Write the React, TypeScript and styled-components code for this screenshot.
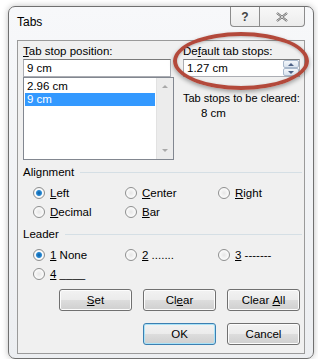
import React from 'react'
import styled, { createGlobalStyle } from 'styled-components'

const GlobalStyle = createGlobalStyle`
    body {
        margin: 0;
        background: #ffffff;
        font-family: "Liberation Sans", Arial, sans-serif;
        font-size: 11.5px;
        color: #000;
    }
`

const App = () => {
    return (
        <>
            <GlobalStyle />
            <Window>
                <TitleBar>
                    <Title>Tabs</Title>
                    <CaptionButtons>
                        <CaptionButton $w={28}>?</CaptionButton>
                        <CaptionButton $w={44}>
                            <svg width="12" height="10" viewBox="0 0 12 10">
                                <path d="M1 1 L11 9 M11 1 L1 9" stroke="#555" strokeWidth="2.2" fill="none" />
                                <path d="M1 1 L11 9 M11 1 L1 9" stroke="#fff" strokeWidth="0.8" fill="none" />
                            </svg>
                        </CaptionButton>
                    </CaptionButtons>
                </TitleBar>

                <Client>
                    <TopSection>
                        <Column>
                            <Label><u>T</u>ab stop position:</Label>
                            <TextBox>9 cm</TextBox>
                            <ListBox>
                                <ListItems>
                                    <ListItem>2.96 cm</ListItem>
                                    <ListItem $selected>9 cm</ListItem>
                                </ListItems>
                                <ScrollBar>
                                    <Arrow $up />
                                    <Arrow />
                                </ScrollBar>
                            </ListBox>
                        </Column>
                        <Column>
                            <Label>De<u>f</u>ault tab stops:</Label>
                            <SpinBox>
                                <span>1.27 cm</span>
                                <SpinButtons>
                                    <SpinButton><SpinArrow $up /></SpinButton>
                                    <SpinButton><SpinArrow /></SpinButton>
                                </SpinButtons>
                            </SpinBox>
                            <ClearLabel>Tab stops to be cleared:</ClearLabel>
                            <ClearValue>8 cm</ClearValue>
                        </Column>
                        <Highlight />
                    </TopSection>

                    <GroupHeader>
                        <span>Alignment</span>
                        <Rule />
                    </GroupHeader>
                    <RadioGrid>
                        <RadioOption><Radio $checked /><span><u>L</u>eft</span></RadioOption>
                        <RadioOption><Radio /><span><u>C</u>enter</span></RadioOption>
                        <RadioOption><Radio /><span><u>R</u>ight</span></RadioOption>
                        <RadioOption><Radio /><span><u>D</u>ecimal</span></RadioOption>
                        <RadioOption><Radio /><span><u>B</u>ar</span></RadioOption>
                    </RadioGrid>

                    <GroupHeader>
                        <span>Leader</span>
                        <Rule />
                    </GroupHeader>
                    <RadioGrid>
                        <RadioOption><Radio $checked /><span><u>1</u> None</span></RadioOption>
                        <RadioOption><Radio /><span><u>2</u> .......</span></RadioOption>
                        <RadioOption><Radio /><span><u>3</u> -------</span></RadioOption>
                        <RadioOption><Radio /><span><u>4</u> ____</span></RadioOption>
                    </RadioGrid>

                    <ButtonRow>
                        <Button><u>S</u>et</Button>
                        <Button>Cl<u>e</u>ar</Button>
                        <Button>Clear&nbsp;<u>A</u>ll</Button>
                    </ButtonRow>
                    <ButtonRow $last>
                        <Button $default>OK</Button>
                        <Button>Cancel</Button>
                    </ButtonRow>
                </Client>
            </Window>
        </>
    )
}

export default App

const Window = styled.div`
    margin: 6px 0 0 8px;
    width: 304px;
    height: 351px;
    border: 1px solid #707070;
    border-radius: 7px;
    background: linear-gradient(#f7f8fa, #eceef1);
    box-shadow: 0 0 6px rgba(0, 0, 0, 0.25);
    display: flex;
    flex-direction: column;
`
const TitleBar = styled.div`
    display: flex;
    justify-content: space-between;
    align-items: flex-start;
    height: 33px;
    padding-left: 8px;
    padding-right: 8px;
`
const Title = styled.div`
    margin-top: 8px;
    font-size: 12px;
    color: #000;
`
const CaptionButtons = styled.div`
    display: flex;
`
const CaptionButton = styled.div<{ $w: number }>`
    width: ${p => p.$w}px;
    height: 19px;
    border: 1px solid #8c8c8c;
    border-top: none;
    display: flex;
    align-items: center;
    justify-content: center;
    background: linear-gradient(#f8f8f8, #ececec);
    color: #444;
    font-size: 12px;
    font-weight: bold;

    &:first-child {
        border-radius: 0 0 0 4px;
        border-right: none;
    }
    &:last-child {
        border-radius: 0 0 4px 0;
    }
`
const Client = styled.div`
    margin: 0 8px 0 8px;
    height: 312px;
    border: 1px solid #9a9a9a;
    background: #f0f0f0;
    padding: 0 0 0 5px;
`
const TopSection = styled.div`
    position: relative;
    display: grid;
    grid-template-columns: 151px 117px;
    column-gap: 9px;
    height: 120px;
`
const Column = styled.div`
    display: flex;
    flex-direction: column;
`
const Label = styled.div`
    margin-top: 3px;
    line-height: 15px;
    height: 15px;
`
const TextBox = styled.div`
    box-sizing: border-box;
    height: 18px;
    width: 148px;
    border: 1px solid #abadb3;
    border-top-color: #7a7a7a;
    background: #fff;
    padding-left: 3px;
    line-height: 16px;
`
const ListBox = styled.div`
    box-sizing: border-box;
    height: 83px;
    border: 1px solid #828790;
    background: #fff;
    display: flex;
`
const ListItems = styled.div`
    flex: 1;
    padding: 2px 1px;
`
const ListItem = styled.div<{ $selected?: boolean }>`
    height: 13px;
    line-height: 13px;
    padding-left: 2px;
    background: ${p => (p.$selected ? '#3399ff' : 'transparent')};
    color: ${p => (p.$selected ? '#fff' : '#000')};
`
const ScrollBar = styled.div`
    width: 16px;
    background: #ececec;
    border-left: 1px solid #e2e2e2;
    display: flex;
    flex-direction: column;
    justify-content: space-between;
    align-items: center;
    padding: 7px 0;
`
const Arrow = styled.div<{ $up?: boolean }>`
    width: 0;
    height: 0;
    border-left: 3px solid transparent;
    border-right: 3px solid transparent;
    ${p => (p.$up ? 'border-bottom: 3px solid #a9a9a9;' : 'border-top: 3px solid #a9a9a9;')}
`
const SpinBox = styled.div`
    box-sizing: border-box;
    height: 18px;
    width: 117px;
    border: 1px solid #abadb3;
    border-top-color: #7a7a7a;
    background: #fff;
    padding-left: 3px;
    line-height: 16px;
    display: flex;
    justify-content: space-between;
`
const SpinButtons = styled.div`
    width: 16px;
    display: flex;
    flex-direction: column;
`
const SpinButton = styled.div`
    flex: 1;
    border: 1px solid #a9b9cc;
    border-radius: 2px;
    background: linear-gradient(#f4f7fb, #d9e3ee);
    display: flex;
    align-items: center;
    justify-content: center;
`
const SpinArrow = styled.div<{ $up?: boolean }>`
    width: 0;
    height: 0;
    border-left: 3px solid transparent;
    border-right: 3px solid transparent;
    ${p => (p.$up ? 'border-bottom: 3px solid #4d6185;' : 'border-top: 3px solid #4d6185;')}
`
const ClearLabel = styled.div`
    margin-top: 14px;
    line-height: 15px;
    font-size: 11px;
    white-space: nowrap;
`
const ClearValue = styled.div`
    padding-left: 18px;
    line-height: 15px;
`
const Highlight = styled.div`
    position: absolute;
    left: 150px;
    top: -9px;
    width: 128px;
    height: 50px;
    border: 4px solid #b3493b;
    border-radius: 50%;
    box-shadow: 0 2px 4px rgba(0, 0, 0, 0.35), inset 0 1px 3px rgba(0, 0, 0, 0.25);
    pointer-events: none;
`
const GroupHeader = styled.div`
    display: flex;
    align-items: center;
    gap: 6px;
    height: 15px;
    line-height: 15px;
    margin-right: 2px;
    margin-top: 4px;
`
const Rule = styled.div`
    flex: 1;
    height: 1px;
    background: #d5dfe5;
`
const RadioGrid = styled.div`
    display: grid;
    grid-template-columns: 92px 93px 90px;
    row-gap: 5px;
    padding: 6px 0 4px 10px;
`
const RadioOption = styled.div`
    display: flex;
    align-items: center;
    gap: 5px;
    height: 14px;
`
const Radio = styled.span<{ $checked?: boolean }>`
    box-sizing: border-box;
    width: 12px;
    height: 12px;
    border-radius: 50%;
    border: 1px solid #8e8f8f;
    background: ${p =>
        p.$checked
            ? 'radial-gradient(circle, #0d5ea0 0, #2a8ad4 2.5px, #ffffff 3.6px, #e6e6e6 6px)'
            : 'radial-gradient(circle, #e6e6e6 0, #f4f4f4 3px, #ffffff 6px)'};
`
const ButtonRow = styled.div<{ $last?: boolean }>`
    display: flex;
    justify-content: flex-end;
    gap: 11px;
    padding-right: 4px;
    margin-top: ${p => (p.$last ? '12px' : '4px')};
`
const Button = styled.div<{ $default?: boolean }>`
    box-sizing: border-box;
    width: 73px;
    height: 22px;
    border: 1px solid ${p => (p.$default ? '#3c7fb1' : '#707070')};
    border-radius: 3px;
    background: linear-gradient(#f2f2f2 0%, #ebebeb 50%, #dddddd 51%, #cfcfcf 100%);
    box-shadow: inset 0 0 0 1px ${p => (p.$default ? '#a9e2f7' : '#fcfcfc')};
    display: flex;
    align-items: center;
    justify-content: center;
`
